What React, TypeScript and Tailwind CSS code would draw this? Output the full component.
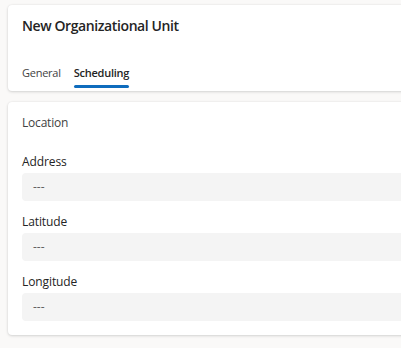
import React from "react";

const fields = ["Address", "Latitude", "Longitude"];

export default function App() {
  return (
    <div
      className="w-[401px] h-[348px] overflow-hidden bg-[#faf9f8] text-[#242424]"
      style={{ fontFamily: '"Open Sans", "Noto Sans", sans-serif' }}
    >
      <div className="pl-2 pt-[5px] flex flex-col gap-[11px]">
        {/* Header card */}
        <div className="w-[420px] bg-white rounded shadow-[0_1px_3px_rgba(0,0,0,0.14),0_0_2px_rgba(0,0,0,0.08)] h-[86px] px-[14px] flex flex-col">
          <h1 className="text-[14px] font-semibold tracking-[-0.4px] mt-[11px] leading-5">New Organizational Unit</h1>
          <div className="flex gap-[13px] mt-auto text-[11px] tracking-[-0.25px]">
            <div className="pb-[7px] pt-1 text-[#424242]">General</div>
            <div className="pb-[3px] pt-1 font-semibold flex flex-col gap-[4px]">
              <span>Scheduling</span>
              <span className="h-[3px] rounded-full bg-[#0f6cbd]" />
            </div>
          </div>
        </div>

        {/* Location card */}
        <div className="w-[420px] bg-white rounded shadow-[0_1px_3px_rgba(0,0,0,0.14),0_0_2px_rgba(0,0,0,0.08)] px-[14px] pt-[11px] pb-[14px]">
          <h2 className="text-[12px] font-medium tracking-[-0.2px] leading-5 text-[#424242]">Location</h2>
          <div className="mt-[19px] flex flex-col gap-[11px]">
            {fields.map((f) => (
              <div key={f} className="flex flex-col">
                <label className="text-[12px] leading-5 mb-px tracking-[-0.1px]">{f}</label>
                <div className="h-[28px] bg-[#f4f4f4] rounded-sm flex items-center pl-[11px] text-[12px] text-[#616161]">
                  ---
                </div>
              </div>
            ))}
          </div>
        </div>
      </div>
    </div>
  );
}
